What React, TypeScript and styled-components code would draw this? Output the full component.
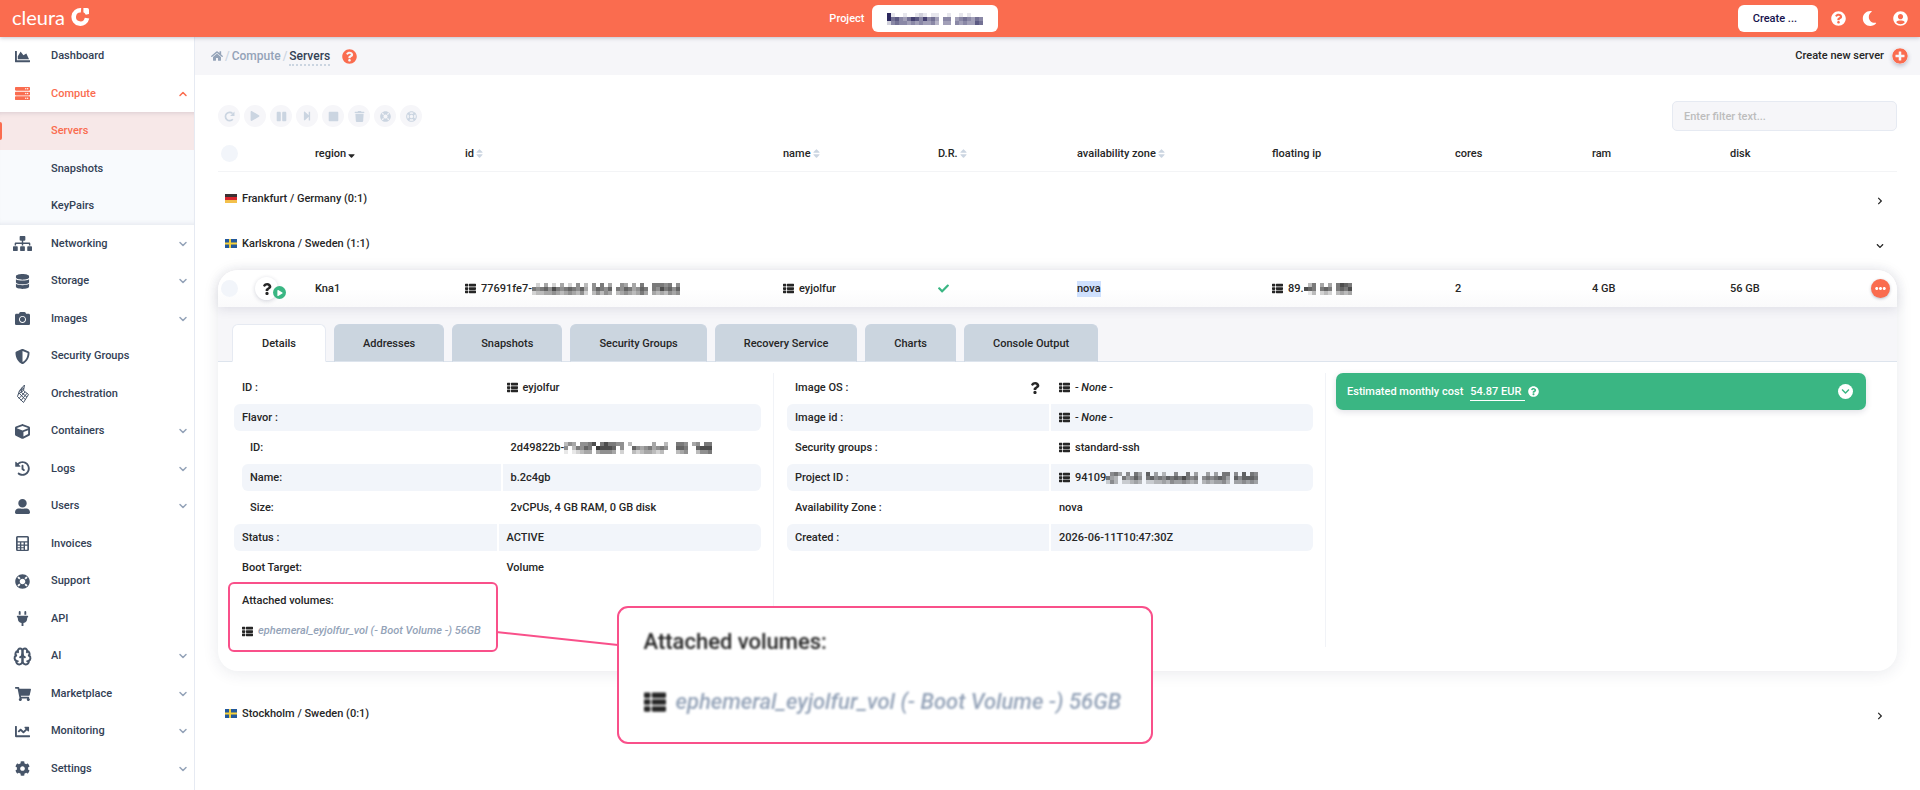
import React from 'react';
import styled, { createGlobalStyle, css } from 'styled-components';
import {
  FaCamera,
  FaChartArea,
  FaChartLine,
  FaCheck,
  FaChevronDown,
  FaChevronRight,
  FaCog,
  FaCube,
  FaDatabase,
  FaEllipsisH,
  FaHistory,
  FaHome,
  FaLifeRing,
  FaMoon,
  FaPause,
  FaPlay,
  FaPlug,
  FaPlusCircle,
  FaQuestion,
  FaQuestionCircle,
  FaRegLifeRing,
  FaServer,
  FaShieldAlt,
  FaShoppingCart,
  FaSitemap,
  FaSort,
  FaSortDown,
  FaStepForward,
  FaStop,
  FaThList,
  FaTrash,
  FaUserAlt,
  FaUserCircle,
} from 'react-icons/fa';
import { FiChevronDown, FiChevronUp } from 'react-icons/fi';
import { LuBrain } from 'react-icons/lu';

const color = {
  brand: '#fa6c4f',
  ink: '#262626',
  nav: '#334155',
  navIcon: '#475569',
  muted: '#94a3b8',
  faint: '#cbd5e1',
  surface: '#f6f6f9',
  stripe: '#f2f5fa',
  line: '#e6eaf2',
  green: '#3ab683',
  pink: '#f9508a',
};

const GlobalStyle = createGlobalStyle`
  *, *::before, *::after { box-sizing: border-box; }
  body {
    margin: 0;
    background: #fff;
    color: ${color.ink};
    font: 500 11px/16px Roboto, "Liberation Sans", sans-serif;
  }
  button, input { font: inherit; color: inherit; }
  button { border: 0; padding: 0; background: none; cursor: pointer; }
  a { color: inherit; text-decoration: none; }
  ul, dl, dd { margin: 0; padding: 0; list-style: none; }
  svg { display: block; flex: none; }
`;

/* ---------- top bar ---------- */

const TopBar = styled.header`
  position: relative;
  z-index: 3;
  display: flex;
  align-items: center;
  justify-content: space-between;
  height: 37px;
  padding: 0 12px;
  background: ${color.brand};
  color: #fff;
  box-shadow: 0 1px 4px rgba(60, 70, 110, 0.3);
`;

const Brand = styled.a`
  display: flex;
  align-items: center;
  gap: 6px;
  padding-bottom: 4px;
  font: 400 20px/24px Lato, sans-serif;
`;

const ProjectPicker = styled.div`
  display: flex;
  align-items: center;
  gap: 8px;
`;

const WhiteButton = styled.button`
  display: flex;
  align-items: center;
  height: 27px;
  padding: 0 15px;
  border-radius: 6px;
  background: #fff;
  color: #16124d;
`;

const TopActions = styled.div`
  display: flex;
  align-items: center;
  gap: 13px;

  & > ${WhiteButton} {
    padding-right: 21px;
  }
`;

const TopIcons = styled.div`
  display: flex;
  align-items: center;
  gap: 16px;
`;

/* ---------- frame ---------- */

const Frame = styled.div`
  display: flex;
  min-height: calc(100vh - 37px);
`;

const Sidebar = styled.nav`
  flex: none;
  width: 195px;
  border-right: 1px solid ${color.line};
  color: ${color.nav};
`;

const navRow = css`
  position: relative;
  display: grid;
  grid-template-columns: 45px 1fr 17px;
  align-items: center;
  padding: 11px 0 10px;
  line-height: 1.5;
`;

const NavItem = styled.a<{ $open?: boolean }>`
  ${navRow}
  color: ${(p) => (p.$open ? color.brand : 'inherit')};
`;

const NavIcon = styled.span<{ $open?: boolean }>`
  display: flex;
  align-items: center;
  justify-content: center;
  height: 16px;
  color: ${(p) => (p.$open ? color.brand : color.navIcon)};
`;

const NavText = styled.span`
  grid-column: 2;
  padding-left: 6px;
`;

const NavArrow = styled.span<{ $open?: boolean }>`
  color: ${(p) => (p.$open ? color.brand : color.muted)};
`;

const SubMenu = styled.ul`
  background: #f8fafd;
  box-shadow: inset 0 5px 5px -4px rgba(60, 70, 110, 0.18), inset 0 -5px 5px -4px rgba(60, 70, 110, 0.1);
`;

const SubItem = styled.a<{ $active?: boolean }>`
  ${navRow}
  ${(p) =>
    p.$active &&
    css`
      color: ${color.brand};
      background: rgba(250, 90, 60, 0.11);
      &::before {
        content: '';
        position: absolute;
        left: 0;
        top: 10px;
        width: 2px;
        height: 18px;
        border-radius: 0 2px 2px 0;
        background: ${color.brand};
      }
    `}
`;

const Main = styled.main`
  flex: 1;
  min-width: 0;
`;

const Crumbs = styled.div`
  display: flex;
  align-items: center;
  height: 38px;
  padding: 0 12px 0 16px;
  background: ${color.surface};
`;

const Trail = styled.div`
  display: flex;
  align-items: center;
  gap: 1px;
  color: ${color.muted};
  font-size: 12px;
`;

const Slash = styled.span`
  padding: 0 1px;
  color: ${color.faint};
`;

const Current = styled.span`
  border-bottom: 2px dotted ${color.faint};
  margin-top: 2px;
  color: ${color.nav};
`;

const BrandIcon = styled.button`
  margin-left: 12px;
  color: ${color.brand};
`;

const CreateServer = styled.button`
  display: flex;
  align-items: center;
  gap: 8px;
  margin-left: auto;

  svg {
    color: ${color.brand};
    border-radius: 50%;
    box-shadow: 0 2px 4px rgba(60, 70, 110, 0.3);
  }
`;

const Content = styled.div`
  padding: 26px 23px 0;
`;

const Tools = styled.div`
  display: flex;
  align-items: center;
  justify-content: space-between;
`;

const ToolButtons = styled.div`
  display: flex;
  gap: 4px;
`;

const ToolButton = styled.button`
  display: flex;
  align-items: center;
  justify-content: center;
  width: 22px;
  height: 22px;
  border-radius: 50%;
  background: ${color.surface};
  color: ${color.faint};
`;

const Filter = styled.input`
  width: 225px;
  height: 30px;
  padding: 0 11px;
  border: 1px solid ${color.line};
  border-radius: 5px;
  background: ${color.surface};

  &::placeholder {
    color: #bdbdbd;
    opacity: 1;
  }
`;

/* ---------- server table ---------- */

const columns = '97px 150fr 318fr 155fr 139fr 195fr 183fr 137fr 138fr 167fr';

const Table = styled.table`
  display: block;
  margin-top: 5px;
`;

const Head = styled.thead`
  display: block;
  padding-bottom: 4px;
`;

const Group = styled.tbody`
  display: block;
`;

const Row = styled.tr`
  display: grid;
  grid-template-columns: ${columns};
  align-items: center;
  height: 37px;
`;

const HeadRow = styled(Row)`
  height: 36px;
  border-bottom: 1px solid #f3f4f6;
`;

const ServerRow = styled(Row)`
  position: relative;
  z-index: 1;
  border-radius: 20px 20px 0 0;
  background: linear-gradient(#fff 50%, #fafafb);
  box-shadow: 0 2px 12px rgba(40, 45, 80, 0.12);
`;

const HeadCell = styled.th`
  display: flex;
  align-items: center;
  padding: 0;
  font-weight: 500;
  white-space: nowrap;
`;

const Cell = styled.td<{ $last?: boolean }>`
  display: flex;
  align-items: center;
  justify-content: ${(p) => (p.$last ? 'space-between' : 'flex-start')};
  gap: 5px;
  padding: ${(p) => (p.$last ? '0 7px 0 0' : '0')};
  white-space: nowrap;
`;

const SortMark = styled.span<{ $active?: boolean }>`
  color: ${(p) => (p.$active ? color.ink : color.faint)};
`;

const Tick = styled.input`
  appearance: none;
  flex: none;
  width: 17px;
  height: 17px;
  margin: 0 0 0 3px;
  border-radius: 50%;
  background: ${color.stripe};
`;

const Status = styled.span`
  position: relative;
  display: flex;
  align-items: center;
  justify-content: center;
  width: 23px;
  height: 23px;
  margin-left: 12px;
  border-radius: 50%;
  background: #fff;
  box-shadow: 0 1px 4px rgba(40, 45, 80, 0.2);
`;

const StatusBadge = styled.span`
  position: absolute;
  left: 18px;
  top: 9px;
  display: flex;
  align-items: center;
  justify-content: center;
  width: 13px;
  height: 13px;
  padding-left: 1px;
  border-radius: 50%;
  background: ${color.green};
  color: #fff;
`;

const Selected = styled.span`
  background: #cfe0fd;
`;

const MoreButton = styled.button`
  display: flex;
  align-items: center;
  justify-content: center;
  width: 19px;
  height: 19px;
  border-radius: 50%;
  background: ${color.brand};
  color: #fff;
  box-shadow: 0 1px 3px rgba(40, 45, 80, 0.3);
`;

const RegionRow = styled.tr`
  display: flex;
  align-items: center;
  height: 45px;
`;

const RegionCell = styled.td`
  display: flex;
  flex: 1;
  align-items: center;
  justify-content: space-between;
  padding: 0 13px 0 7px;
`;

const RegionToggle = styled.button`
  padding-top: 4px;
`;

const RegionName = styled.span`
  display: flex;
  align-items: center;
  gap: 5px;
`;

const Card = styled.tbody`
  display: block;
  margin: 4px 0 20px;
  border-radius: 20px;
  background: #fff;
  box-shadow: 0 2px 16px rgba(40, 45, 80, 0.1);
`;

const DetailRow = styled.tr`
  display: block;
`;

const DetailCell = styled.td`
  display: block;
  padding: 0;
`;

const TabStrip = styled.div`
  display: flex;
  gap: 8px;
  padding: 17px 14px 0;
  border-bottom: 1px solid #dde4ed;
  background: ${color.surface};
`;

const Tab = styled.button<{ $active?: boolean }>`
  height: 38px;
  margin-bottom: -1px;
  padding: 2px ${(p) => (p.$active ? 29 : 28)}px 0;
  border: 1px solid ${(p) => (p.$active ? color.line : color.faint)};
  border-bottom-color: ${(p) => (p.$active ? '#fff' : '#dde4ed')};
  border-radius: 6px 6px 0 0;
  background: ${(p) => (p.$active ? '#fff' : '#cbd5df')};
  white-space: nowrap;
`;

const Panels = styled.div`
  display: grid;
  grid-template-columns: repeat(3, minmax(0, 1fr));
  padding: 11px 20px 24px 3px;
`;

const Panel = styled.section`
  padding: 1px 12px 0 13px;

  & + & {
    border-left: 1px solid #f1f3f7;
  }
`;

const CostPanel = styled(Panel)`
  padding: 0 11px 0 10px;
`;

/* ---------- property lists ---------- */

const Props = styled.dl<{ $nested?: boolean }>`
  display: grid;
  gap: 3px;
  margin-left: ${(p) => (p.$nested ? '8px' : '0')};

  & + & {
    margin-top: 3px;
  }
`;

const Prop = styled.div<{ $striped?: boolean }>`
  display: grid;
  grid-template-columns: repeat(2, minmax(0, 1fr));
  gap: 2px;

  & > * {
    display: flex;
    align-items: center;
    gap: 5px;
    height: 27px;
    padding: 0 8px;
    background: ${(p) => (p.$striped ? color.stripe : 'transparent')};
    white-space: nowrap;
  }
  & > :first-child {
    border-radius: 6px 0 0 6px;
  }
  & > :last-child {
    border-radius: 0 6px 6px 0;
  }
  & > :only-child {
    grid-column: 1 / -1;
    border-radius: 6px;
  }
`;

const OsMark = styled.span`
  margin-left: auto;
`;

/* ---------- attached volumes and callout ---------- */

const Volumes = styled.section`
  position: relative;
  width: calc(50% + 6px);
  margin: 1px 0 -5px -6px;
  padding: 9px 12px 11px;
  border: 2px solid ${color.pink};
  border-radius: 6px;
`;

const VolumeLine = styled.p`
  display: flex;
  align-items: center;
  gap: 5px;
  height: 16px;
  margin: 0;
  white-space: nowrap;

  & + & {
    margin-top: 14px;
  }
`;

const VolumeLink = styled.a`
  color: ${color.muted};
  font-style: italic;
`;

const Connector = styled.svg`
  position: absolute;
  z-index: 2;
  left: 100%;
  top: 43px;
`;

const Callout = styled.aside`
  position: absolute;
  z-index: 2;
  left: calc(100% + 121px);
  top: 22px;
  padding: 18px 30px 24px 25px;
  border: 2px solid ${color.pink};
  border-radius: 11px;
  background: #fff;
  font-size: 22px;
  line-height: 32px;

  ${VolumeLine} {
    height: 32px;
    gap: 10px;
    filter: blur(1px);
  }
  ${VolumeLine} + ${VolumeLine} {
    margin-top: 28px;
  }
`;

/* ---------- cost ---------- */

const Cost = styled.div`
  display: flex;
  align-items: center;
  height: 37px;
  padding: 0 13px 0 11px;
  border-radius: 7px;
  background: ${color.green};
  color: #fff;
  box-shadow: 0 2px 6px rgba(40, 45, 80, 0.14);
`;

const Price = styled.a`
  margin: 2px 3px 0 7px;
  padding-right: 4px;
  border-bottom: 1px solid #fff;
`;

const CostToggle = styled.button`
  display: flex;
  align-items: center;
  justify-content: center;
  width: 15px;
  height: 15px;
  margin-left: auto;
  border-radius: 50%;
  background: #fff;
  color: ${color.green};
`;

/* ---------- drawings ---------- */

const Logo = () => (
  <svg width="19" height="19" viewBox="0 0 19 19" aria-hidden="true">
    <path d="M10 3.300 A6.700 6.700 0 1 0 16 11.200" fill="none" stroke="#fff" strokeWidth="4.600" />
    <path d="M12.400 1h3.800a1.800 1.800 0 0 1 1.800 1.800V7l-3.200.8a5.500 5.500 0 0 0-2.400-2.600z" fill="#fff" />
  </svg>
);

const Orchestration = () => (
  <svg width="14" height="20" viewBox="0 0 14 20" fill="none" stroke="currentColor" strokeWidth="1" aria-hidden="true">
    <path d="M8.500 1 L7.500 6.500 L12.500 10.500 L7.500 18.500 L1.500 12.500 L3.500 6.500 Z" />
    <path d="M6 3.500 L5.500 8.500 L11 13.200 M3 9 L9.500 15.800 M8 4 L3.500 7.500 M7.500 6.500 L2.500 10 M9 8 L3 14.500 M11 9.300 L5 16.500" />
  </svg>
);

const Calculator = () => (
  <svg width="13" height="15" viewBox="0 0 13 15" fill="currentColor" aria-hidden="true">
    <path
      fillRule="evenodd"
      d="M1.500 0h10A1.500 1.500 0 0 1 13 1.500v12a1.500 1.500 0 0 1-1.500 1.500h-10A1.500 1.500 0 0 1 0 13.500v-12A1.500 1.500 0 0 1 1.500 0zM1.700 1.500v3.700h9.600V1.500zM1.700 6.600v1.900h2.200V6.600zM5.300 6.600v1.900h2.300V6.600zM9 6.600v1.900h2.300V6.600zM1.700 9.700v1.500h2.200V9.700zM5.300 9.700v1.500h2.300V9.700zM1.700 12.300v1.400h2.200v-1.400zM5.300 12.300v1.400h2.300v-1.400zM9 9.700v4h2.300v-4z"
    />
  </svg>
);

const RefreshIcon = () => (
  <svg width="11" height="11" viewBox="0 0 11 11" aria-hidden="true">
    <path d="M8.800 8.300 A4.200 4.200 0 1 1 8.600 2.500" fill="none" stroke="currentColor" strokeWidth="1.700" />
    <path d="M10.500 .6V5H6.100z" fill="currentColor" />
  </svg>
);

const German = () => (
  <svg width="12" height="9" viewBox="0 0 12 9" aria-hidden="true">
    <rect width="12" height="3" fill="#3b3133" />
    <rect y="3" width="12" height="3" fill="#d9252c" />
    <rect y="6" width="12" height="3" fill="#f3c04b" />
  </svg>
);

const Swedish = () => (
  <svg width="12" height="9" viewBox="0 0 12 9" aria-hidden="true">
    <rect width="12" height="9" fill="#23599c" />
    <path d="M4 0h2v9H4zM0 3.500h12v2H0z" fill="#f5d13d" />
  </svg>
);

/* Pixelated stand-in for a hidden value; each digit is the darkness of one block. */
const Redacted = ({ rows, tone = '#222', block = 4 }: { rows: string[]; tone?: string; block?: number }) => (
  <svg
    width={rows[0].length * block}
    height={rows.length * block}
    shapeRendering="crispEdges"
    role="img"
    aria-label="hidden"
  >
    {rows.flatMap((row, y) =>
      [...row].map((digit, x) => (
        <rect
          key={`${x}-${y}`}
          x={x * block}
          y={y * block}
          width={block}
          height={block}
          fill={tone}
          opacity={Number(digit) / 10}
        />
      )),
    )}
  </svg>
);

const Masked = styled.span`
  display: flex;
  align-items: center;
`;

/* ---------- data ---------- */

type NavEntry = { label: string; icon: React.ReactNode; arrow?: boolean };

const nav: NavEntry[] = [
  { label: 'Networking', icon: <FaSitemap size={19} />, arrow: true },
  { label: 'Storage', icon: <FaDatabase size={15} />, arrow: true },
  { label: 'Images', icon: <FaCamera size={15} />, arrow: true },
  { label: 'Security Groups', icon: <FaShieldAlt size={15} /> },
  { label: 'Orchestration', icon: <Orchestration /> },
  { label: 'Containers', icon: <FaCube size={15} />, arrow: true },
  { label: 'Logs', icon: <FaHistory size={15} />, arrow: true },
  { label: 'Users', icon: <FaUserAlt size={15} />, arrow: true },
  { label: 'Invoices', icon: <Calculator /> },
  { label: 'Support', icon: <FaLifeRing size={15} /> },
  { label: 'API', icon: <FaPlug size={15} /> },
  { label: 'AI', icon: <LuBrain size={19} strokeWidth={2.5} />, arrow: true },
  { label: 'Marketplace', icon: <FaShoppingCart size={16} />, arrow: true },
  { label: 'Monitoring', icon: <FaChartLine size={15} />, arrow: true },
  { label: 'Settings', icon: <FaCog size={15} />, arrow: true },
];

const tools: [string, React.ReactNode][] = [
  ['Restart', <RefreshIcon />],
  ['Start', <FaPlay size={10} />],
  ['Pause', <FaPause size={11} />],
  ['Resume', <FaStepForward size={10} />],
  ['Stop', <FaStop size={11} />],
  ['Delete', <FaTrash size={11} />],
  ['Rescue', <FaLifeRing size={11} />],
  ['Unrescue', <FaRegLifeRing size={11} />],
];

const headings: { label: string; sort?: 'none' | 'down' }[] = [
  { label: 'region', sort: 'down' },
  { label: 'id', sort: 'none' },
  { label: 'name', sort: 'none' },
  { label: 'D.R.', sort: 'none' },
  { label: 'availability zone', sort: 'none' },
  { label: 'floating ip' },
  { label: 'cores' },
  { label: 'ram' },
  { label: 'disk' },
];

const tabs = ['Details', 'Addresses', 'Snapshots', 'Security Groups', 'Recovery Service', 'Charts', 'Console Output'];

const ListIcon = ({ size = 11 }: { size?: number }) => <FaThList size={size} />;

const Region = ({ flag, name, open }: { flag: React.ReactNode; name: string; open?: boolean }) => (
  <RegionRow>
    <RegionCell>
      <RegionName>
        {flag}
        {name}
      </RegionName>
      <RegionToggle aria-label={`Toggle ${name}`}>
        {open ? <FaChevronDown size={8} /> : <FaChevronRight size={8} />}
      </RegionToggle>
    </RegionCell>
  </RegionRow>
);

type FieldProps = { label: string; striped?: boolean; mark?: React.ReactNode; children?: React.ReactNode };

const Field = ({ label, striped, mark, children }: FieldProps) => (
  <Prop $striped={striped}>
    <dt>
      {label}
      {mark && <OsMark>{mark}</OsMark>}
    </dt>
    {children && <dd>{children}</dd>}
  </Prop>
);

const VolumeInfo = ({ iconSize }: { iconSize: number }) => (
  <>
    <VolumeLine>Attached volumes:</VolumeLine>
    <VolumeLine>
      <ListIcon size={iconSize} />
      <VolumeLink href="#volume">ephemeral_eyjolfur_vol (- Boot Volume -) 56GB</VolumeLink>
    </VolumeLine>
  </>
);

export default function App() {
  return (
    <>
      <GlobalStyle />
      <TopBar>
        <Brand href="#home">
          cleura
          <Logo />
        </Brand>
        <ProjectPicker>
          <span id="project-label">Project</span>
          <WhiteButton aria-labelledby="project-label">
            <Redacted
              tone="#16124d"
              rows={['910010012101100100101000', '967546875856405504565465', '256554545445304405454476']}
            />
          </WhiteButton>
        </ProjectPicker>
        <TopActions>
          <WhiteButton>Create ...</WhiteButton>
          <TopIcons>
            <button aria-label="Help">
              <FaQuestionCircle size={15} />
            </button>
            <button aria-label="Dark mode">
              <FaMoon size={15} />
            </button>
            <button aria-label="Account">
              <FaUserCircle size={15} />
            </button>
          </TopIcons>
        </TopActions>
      </TopBar>

      <Frame>
        <Sidebar aria-label="Main">
          <NavItem href="#dashboard">
            <NavIcon>
              <FaChartArea size={15} />
            </NavIcon>
            <NavText>Dashboard</NavText>
          </NavItem>
          <NavItem href="#compute" $open>
            <NavIcon $open>
              <FaServer size={15} />
            </NavIcon>
            <NavText>Compute</NavText>
            <NavArrow $open>
              <FiChevronUp size={12} strokeWidth={3} />
            </NavArrow>
          </NavItem>
          <SubMenu>
            {['Servers', 'Snapshots', 'KeyPairs'].map((label, i) => (
              <li key={label}>
                <SubItem href={`#${label}`} $active={i === 0}>
                  <NavText>{label}</NavText>
                </SubItem>
              </li>
            ))}
          </SubMenu>
          {nav.map((item) => (
            <NavItem key={item.label} href={`#${item.label}`}>
              <NavIcon>{item.icon}</NavIcon>
              <NavText>{item.label}</NavText>
              {item.arrow && (
                <NavArrow>
                  <FiChevronDown size={12} strokeWidth={3} />
                </NavArrow>
              )}
            </NavItem>
          ))}
        </Sidebar>

        <Main>
          <Crumbs>
            <Trail>
              <FaHome size={12} />
              <Slash>/</Slash>
              <a href="#compute">Compute</a>
              <Slash>/</Slash>
              <Current>Servers</Current>
            </Trail>
            <BrandIcon aria-label="Help about servers">
              <FaQuestionCircle size={15} />
            </BrandIcon>
            <CreateServer>
              Create new server
              <FaPlusCircle size={16} />
            </CreateServer>
          </Crumbs>

          <Content>
            <Tools>
              <ToolButtons>
                {tools.map(([label, icon]) => (
                  <ToolButton key={label} aria-label={label}>
                    {icon}
                  </ToolButton>
                ))}
              </ToolButtons>
              <Filter aria-label="Filter" placeholder="Enter filter text..." />
            </Tools>

            <Table>
              <Head>
                <HeadRow>
                  <HeadCell>
                    <Tick type="checkbox" aria-label="Select all" />
                  </HeadCell>
                  {headings.map(({ label, sort }) => (
                    <HeadCell key={label}>
                      {label}
                      {sort && (
                        <SortMark $active={sort === 'down'}>
                          {sort === 'down' ? <FaSortDown size={11} /> : <FaSort size={11} />}
                        </SortMark>
                      )}
                    </HeadCell>
                  ))}
                </HeadRow>
              </Head>
              <Group>
                <Region flag={<German />} name="Frankfurt / Germany (0:1)" />
                <Region flag={<Swedish />} name="Karlskrona / Sweden (1:1)" open />
              </Group>
              <Card>
                <ServerRow>
                  <Cell>
                    <Tick type="checkbox" aria-label="Select eyjolfur" />
                    <Status>
                      <FaQuestion size={12} />
                      <StatusBadge>
                        <FaPlay size={6} />
                      </StatusBadge>
                    </Status>
                  </Cell>
                  <Cell>Kna1</Cell>
                  <Cell>
                    <ListIcon />
                    <Masked>
                      77691fe7-
                      <Redacted
                        rows={[
                          '0204020402050305060400540406006665605',
                          '6567586567657405765706576457606586757',
                          '2334454345435203535403454346404343545',
                        ]}
                      />
                    </Masked>
                  </Cell>
                  <Cell>
                    <ListIcon />
                    eyjolfur
                  </Cell>
                  <Cell>
                    <FaCheck size={11} color={color.green} />
                  </Cell>
                  <Cell>
                    <Selected>nova</Selected>
                  </Cell>
                  <Cell>
                    <ListIcon />
                    <Masked>
                      89.
                      <Redacted rows={['036040406876', '876067606768', '013023203434']} />
                    </Masked>
                  </Cell>
                  <Cell>2</Cell>
                  <Cell>4 GB</Cell>
                  <Cell $last>
                    56 GB
                    <MoreButton aria-label="More actions">
                      <FaEllipsisH size={11} />
                    </MoreButton>
                  </Cell>
                </ServerRow>
                <DetailRow>
                  <DetailCell>
                    <TabStrip role="tablist">
                      {tabs.map((tab, i) => (
                        <Tab key={tab} role="tab" aria-selected={i === 0} $active={i === 0}>
                          {tab}
                        </Tab>
                      ))}
                    </TabStrip>
                    <Panels>
                      <Panel>
                        <Props>
                          <Field label="ID :">
                            <ListIcon />
                            eyjolfur
                          </Field>
                          <Field label="Flavor :" striped />
                        </Props>
                        <Props $nested>
                          <Field label="ID:">
                            <Masked>
                              2d49822b-
                              <Redacted
                                rows={[
                                  '3540556806866550300000400300665045066',
                                  '5036576098887050075456456500776007888',
                                  '1012344045554020032344323000345003556',
                                ]}
                              />
                            </Masked>
                          </Field>
                          <Field label="Name:" striped>
                            b.2c4gb
                          </Field>
                          <Field label="Size:">2vCPUs, 4 GB RAM, 0 GB disk</Field>
                        </Props>
                        <Props>
                          <Field label="Status :" striped>
                            ACTIVE
                          </Field>
                          <Field label="Boot Target:">Volume</Field>
                        </Props>
                        <Volumes>
                          <VolumeInfo iconSize={11} />
                          <Connector width="124" height="24" viewBox="0 0 124 24" aria-hidden="true">
                            <path d="M0 5 L122 18" stroke={color.pink} strokeWidth="2" />
                          </Connector>
                          <Callout>
                            <VolumeInfo iconSize={22} />
                          </Callout>
                        </Volumes>
                      </Panel>
                      <Panel>
                        <Props>
                          <Field label="Image OS :" mark={<FaQuestion size={12} />}>
                            <ListIcon />
                            <em>- None -</em>
                          </Field>
                          <Field label="Image id :" striped>
                            <ListIcon />
                            <em>- None -</em>
                          </Field>
                          <Field label="Security groups :">
                            <ListIcon />
                            standard-ssh
                          </Field>
                          <Field label="Project ID :" striped>
                            <ListIcon />
                            <Masked>
                              94109
                              <Redacted
                                rows={[
                                  '05640506407040300500604004040660507065',
                                  '64306457506756576768656056567640757776',
                                  '25302234302233435445434034344530445454',
                                ]}
                              />
                            </Masked>
                          </Field>
                          <Field label="Availability Zone :">nova</Field>
                          <Field label="Created :" striped>
                            2026-06-11T10:47:30Z
                          </Field>
                        </Props>
                      </Panel>
                      <CostPanel>
                        <Cost>
                          Estimated monthly cost
                          <Price href="#cost">54.87 EUR</Price>
                          <FaQuestionCircle size={11} />
                          <CostToggle aria-label="Show cost details">
                            <FaChevronDown size={9} />
                          </CostToggle>
                        </Cost>
                      </CostPanel>
                    </Panels>
                  </DetailCell>
                </DetailRow>
              </Card>
              <Group>
                <Region flag={<Swedish />} name="Stockholm / Sweden (0:1)" />
              </Group>
            </Table>
          </Content>
        </Main>
      </Frame>
    </>
  );
}
